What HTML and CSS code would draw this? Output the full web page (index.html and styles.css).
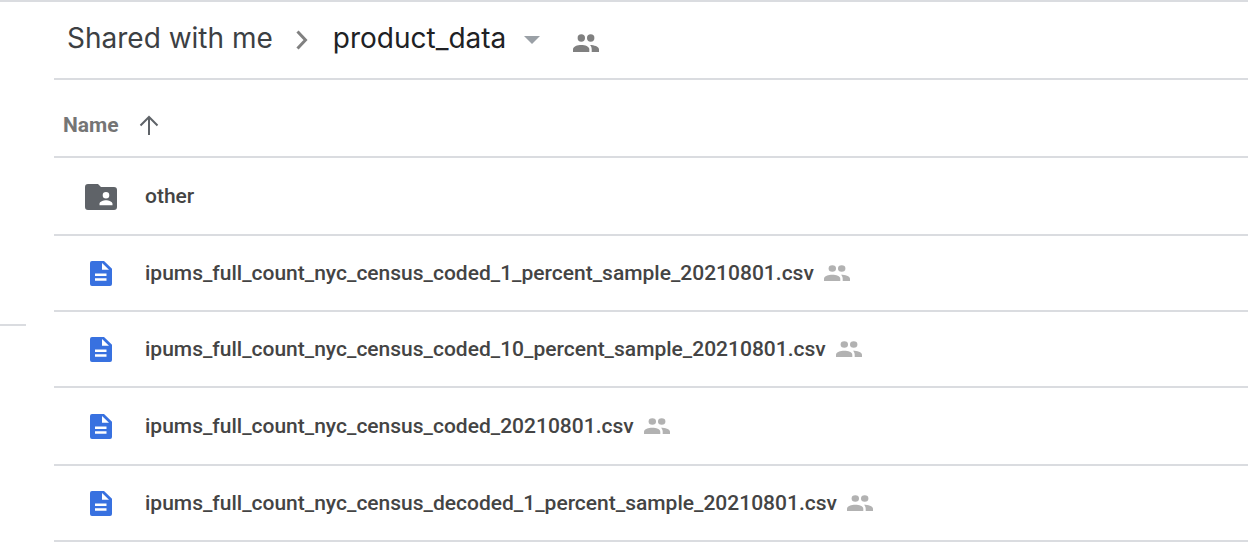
FILE: index.html
```html
<!DOCTYPE html>
<html lang="en">
<head>
<meta charset="utf-8">
<title>product_data</title>
<link rel="stylesheet" href="styles.css">
</head>
<body>
<svg class="sprite" aria-hidden="true">
  <symbol id="people" viewBox="0 0 26 18" preserveAspectRatio="none">
    <circle cx="8.3" cy="4" r="3.7"/><circle cx="17.7" cy="4" r="3.7"/>
    <path d="M0 18v-2.600C0 12.300 4.500 11 8.300 11s8 1.300 8 4.400V18z"/>
    <path d="M17 11c4 .2 9 1.300 9 4.400V18h-7.300v-2.600c0-2-.7-3.300-1.700-4.400z"/>
  </symbol>
  <symbol id="doc" viewBox="0 0 22 26" preserveAspectRatio="none">
    <path fill-rule="evenodd" d="M2 0H14l8 8v16a2 2 0 0 1-2 2H2a2 2 0 0 1-2-2V2a2 2 0 0 1 2-2zM12 2v7h7zM5 13v2.500h11.500V13zM5 18v2.500h11.500V18z"/>
  </symbol>
</svg>
<div class="layout">
  <aside class="sidebar"><hr class="sidebar-rule"></aside>
  <main class="content">
    <nav class="breadcrumbs" aria-label="Breadcrumb">
      <a class="crumb" href="#">Shared with me</a>
      <svg class="chevron" viewBox="0 0 12 20" aria-hidden="true"><path d="M1.500 1.500 9.500 10l-8 8.500"/></svg>
      <button class="crumb current" type="button">product_data
        <svg class="caret" viewBox="0 0 16 8" aria-hidden="true"><path d="M0 0h16L8 8z"/></svg>
      </button>
      <svg class="people header-people" role="img" aria-label="Shared"><use href="#people"/></svg>
    </nav>
    <table class="files">
      <thead>
        <tr><th scope="col"><button class="sort" type="button">Name
          <svg class="arrow" viewBox="0 0 20 20" aria-hidden="true"><path d="M10 20V2M1.500 10.500 10 2l8.500 8.500"/></svg>
        </button></th></tr>
      </thead>
      <tbody>
        <tr><td><div class="file">
          <span class="kind"><svg class="folder" viewBox="0 0 32 26" aria-hidden="true"><path fill-rule="evenodd" d="M3 0h10l3 3h13a3 3 0 0 1 3 3v17a3 3 0 0 1-3 3H3a3 3 0 0 1-3-3V3a3 3 0 0 1 3-3zM21 8a3.300 3.300 0 1 0 0 6.600A3.300 3.300 0 0 0 21 8zM14.500 21.300h13v-1.500c0-2.200-4-3.500-6.500-3.500s-6.500 1.300-6.500 3.500z"/></svg></span>
          <span class="name">other</span></div></td></tr>
        <tr><td><div class="file">
          <span class="kind"><svg class="doc" aria-hidden="true"><use href="#doc"/></svg></span>
          <span class="name">ipums_full_count_nyc_census_coded_1_percent_sample_20210801.csv</span>
          <svg class="people" role="img" aria-label="Shared"><use href="#people"/></svg></div></td></tr>
        <tr><td><div class="file">
          <span class="kind"><svg class="doc" aria-hidden="true"><use href="#doc"/></svg></span>
          <span class="name">ipums_full_count_nyc_census_coded_10_percent_sample_20210801.csv</span>
          <svg class="people" role="img" aria-label="Shared"><use href="#people"/></svg></div></td></tr>
        <tr><td><div class="file">
          <span class="kind"><svg class="doc" aria-hidden="true"><use href="#doc"/></svg></span>
          <span class="name">ipums_full_count_nyc_census_coded_20210801.csv</span>
          <svg class="people" role="img" aria-label="Shared"><use href="#people"/></svg></div></td></tr>
        <tr><td><div class="file">
          <span class="kind"><svg class="doc" aria-hidden="true"><use href="#doc"/></svg></span>
          <span class="name">ipums_full_count_nyc_census_decoded_1_percent_sample_20210801.csv</span>
          <svg class="people" role="img" aria-label="Shared"><use href="#people"/></svg></div></td></tr>
      </tbody>
    </table>
  </main>
</div>
</body>
</html>
```
FILE: styles.css
```css
* { box-sizing: border-box; }
body { margin: 0; background: #fff; color: #444; font-family: Roboto, sans-serif; }
button { border: 0; padding: 0; background: none; color: inherit; font: inherit; cursor: pointer; }
.sprite { display: none; }
.layout { display: flex; border-top: 2px solid #dadce0; }
.sidebar { width: 54px; flex: none; padding-top: 322px; }
.sidebar-rule { width: 26px; margin: 0; border: 0; border-top: 2px solid #dadce0; }
.content { flex: 1; min-width: 0; }
.breadcrumbs {
  display: flex;
  align-items: center;
  height: 78px;
  padding: 0 0 4px 13px;
  border-bottom: 2px solid #dadce0;
  font: 28px/36px Inter, sans-serif;
}
.crumb { color: #3c4043; text-decoration: none; white-space: nowrap; }
.current { display: flex; align-items: center; gap: 18px; color: #202124; }
.chevron { width: 12px; height: 20px; margin: 4px 25px 0 23px; fill: none; stroke: #808080; stroke-width: 3; }
.caret { width: 16px; height: 8px; margin-top: 4px; fill: #9aa0a6; }
.people { width: 26px; height: 16px; flex: none; margin-left: 10px; fill: #b2b2b2; }
.header-people { height: 18px; margin: 10px 0 0 33px; fill: #808080; }
.files { width: 100%; border-collapse: separate; border-spacing: 0; font-size: 21px; line-height: 24px; }
.files th, .files td { height: 76px; padding: 0; border-bottom: 2px solid #dadce0; text-align: left; vertical-align: middle; }
.files th { height: 78px; padding: 14px 0 0 9px; color: #757575; }
.files tbody tr:nth-child(3n + 1) td { height: 78px; }
.sort { display: flex; align-items: center; gap: 20px; font-weight: 700; }
.arrow { width: 20px; height: 20px; fill: none; stroke: #5f6368; stroke-width: 2; }
.file { display: flex; align-items: center; padding-left: 31px; font-weight: 500; }
.kind { display: flex; justify-content: center; width: 32px; padding-top: 1px; margin-right: 28px; }
.name { white-space: nowrap; }
.folder { width: 32px; height: 26px; fill: #5f6368; }
.doc { width: 22px; height: 25px; fill: #3871e0; }
```
